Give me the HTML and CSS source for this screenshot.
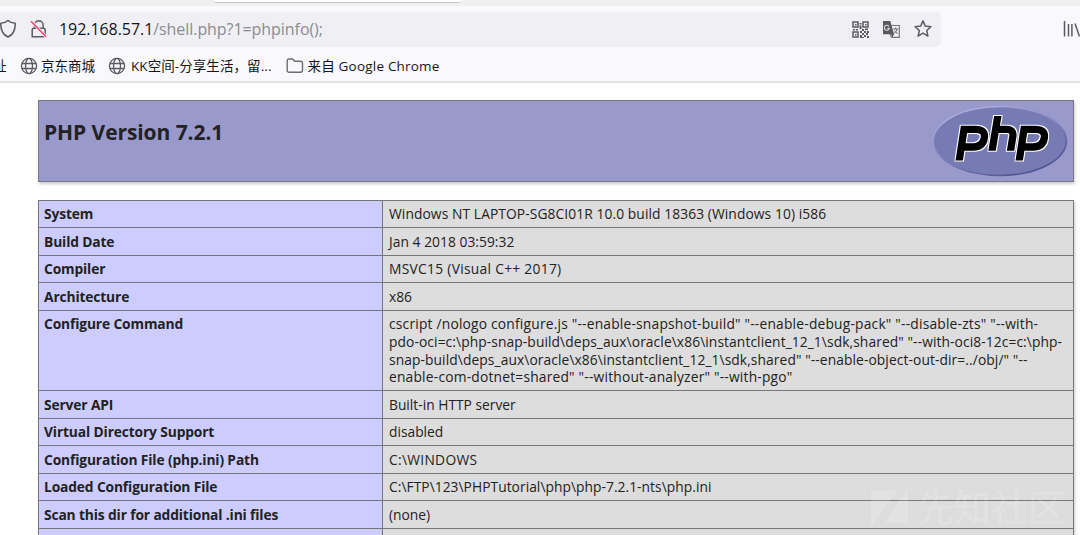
FILE: index.html
```html
<!DOCTYPE html>
<html lang="zh">
<head>
<meta charset="utf-8">
<title>phpinfo()</title>
<link rel="stylesheet" href="styles.css">
</head>
<body>
<div class="tabstrip"><div class="tab"></div></div>
<div class="navbar">
  <div class="urlbar">
    <svg class="shield" width="18" height="20" viewBox="0 0 18 20"><path d="M8 1.5C9.8 3.2 12.2 4 15.2 4.2C15.5 10.5 13.3 15.5 8 18C2.7 15.5.5 10.5.8 4.2C3.8 4 6.2 3.2 8 1.5Z" fill="none" stroke="#5b5b66" stroke-width="1.5" stroke-linejoin="round"/></svg>
    <svg class="lock" width="18" height="20" viewBox="0 0 18 20"><path d="M4.5 9V6a4.300 4.300 0 0 1 8.600 0V9M2.200 17.700V11Q2.200 9.200 4 9.200H13.300Q15.200 9.200 15.200 11V15.900Q15.200 17.700 13.300 17.700Z" fill="none" stroke="#5b5b66" stroke-width="1.500"/><path d="M1 1.800 16.200 18" stroke="#efeff3" stroke-width="3"/><path d="M1 2.200 16 17.700" stroke="#f0426c" stroke-width="1.500"/></svg>
    <div class="url"><span class="host">192.168.57.1</span><span class="path">/shell.php?1=phpinfo();</span></div>
    <svg class="qr" width="17" height="17" viewBox="0 0 17 17"><path d="M1 1h5v5H1zM11 1h5v5h-5zM1 11h5v5H1z" fill="none" stroke="#5b5b66" stroke-width="1.500"/><path d="M3 3h1.500v1.500H3zM13 3h1.500v1.500H13zM3 13h1.500v1.500H3zM7.500 2h2v1.500h-2zM7.500 4.500h2V8h-2zM1 8h2v1.500H1zM4 8h2v1.500H4zM10 8h2v2h-2zM13 7.500h3V9h-3zM8 10h2v2H8zM12 10h2v2h-2zM15 10h2v2h-2zM10 12h2v2h-2zM14 12h2v2h-2zM8 14h2v3H8zM12 14h2v2h-2zM15 15h2v2h-2zM10 16h2v1h-2z" fill="#5b5b66"/></svg>
    <svg class="translate" width="19" height="19" viewBox="0 0 19 19"><path d="M8 5.500h9.300v11.800H9.500L8 14" fill="#f5f5f7" stroke="#77777c" stroke-width="1.200"/><path d="M1 1h7.300L12 14.200H1z" fill="#5a5a5e"/><path d="M9 14.200h3L10.500 17z" fill="#3e3e42"/><path d="M7 6.400A2.500 2.500 0 1 0 7.300 8.300H5.200" fill="none" stroke="#ddd" stroke-width="1.100"/><path d="M11.200 9h5M13.700 7.500V9M15.300 9q-.8 3-3.600 4.700M12.300 10.500l3.500 3.500" fill="none" stroke="#66666b"/></svg>
    <svg class="star" width="20" height="20" viewBox="0 0 20 20"><path d="M10 1.900 12.300 7.100 17.900 7.700 13.700 11.500 14.900 17.100 10 14.200 5.100 17.100 6.300 11.500 2.100 7.700 7.700 7.100Z" fill="none" stroke="#5b5b66" stroke-width="1.500" stroke-linejoin="round"/></svg>
  </div>
  <svg class="library" width="17" height="18" viewBox="0 0 17 18"><path d="M1.500 1v15.500M5.500 4v12.500M8.900 4v12.500M12 3.500 16.500 16.500" stroke="#5b5b66" stroke-width="1.500" fill="none"/></svg>
</div>
<div class="bookmarks">
  <span class="bm bm-cut">址</span>
  <svg class="globe" width="18" height="18" viewBox="0 0 18 18"><g fill="none" stroke="#5b5b66" stroke-width="1.300"><circle cx="9" cy="9" r="7.600"/><ellipse cx="9" cy="9" rx="3.500" ry="7.600"/><path d="M2 6.500h14M2 11.500h14"/></g></svg>
  <span class="bm bm-jd">京东商城</span>
  <svg class="globe" width="18" height="18" viewBox="0 0 18 18"><g fill="none" stroke="#5b5b66" stroke-width="1.300"><circle cx="9" cy="9" r="7.600"/><ellipse cx="9" cy="9" rx="3.500" ry="7.600"/><path d="M2 6.500h14M2 11.500h14"/></g></svg>
  <span class="bm bm-kk">KK空间-分享生活，留...</span>
  <svg class="folder" width="18" height="18" viewBox="0 0 18 18"><path d="M1.200 4Q1.200 2 3.200 2H6.500L8.800 4.300H14.500Q16.500 4.300 16.500 6.300V13.200Q16.500 15.200 14.500 15.200H3.200Q1.200 15.200 1.200 13.200Z" fill="none" stroke="#6b6b74" stroke-width="1.400"/></svg>
  <span class="bm bm-gc">来自 Google Chrome</span>
</div>
<main class="page">
  <header class="banner">
    <h1>PHP Version 7.2.1</h1>
    <svg class="logo" width="138" height="74" viewBox="0 0 138 74">
      <defs>
        <linearGradient id="rim" x1="0.200" y1="0" x2="0.800" y2="1"><stop offset="0" stop-color="#b7b9e2"/><stop offset=".45" stop-color="#8587bd"/><stop offset="1" stop-color="#484b8d"/></linearGradient>
        <clipPath id="desc"><rect x="0" y="0" width="138" height="56.500"/></clipPath>
        <clipPath id="asc"><rect x="0" y="12" width="138" height="34.700"/></clipPath>
        <filter id="halo" x="-10%" y="-10%" width="120%" height="120%"><feMorphology operator="dilate" radius="1"/><feGaussianBlur stdDeviation=".3"/></filter>
        <g id="php" fill="none" stroke-width="7.300">
          <g clip-path="url(#desc)"><path d="M27.700 60 33 25.400H44Q54.800 25.400 53.300 34Q51.800 43 42 43H31"/><path d="M87.700 60 93 25.400H104Q114.800 25.400 113.300 34Q111.800 43 102 43H91"/></g>
          <g clip-path="url(#asc)"><path d="M67.500 8 60.500 50M65 25.400H75.500Q83 25.400 81.800 32.500L79 50"/></g>
        </g>
      </defs>
      <ellipse cx="69" cy="37" rx="67.300" ry="35.300" fill="url(#rim)"/>
      <ellipse cx="68.700" cy="37" rx="65.700" ry="33.700" fill="#777bb3"/>
      <g filter="url(#halo)"><use href="#php" stroke="#fff"/></g>
      <use href="#php" stroke="#000"/>
    </svg>
  </header>
  <section class="info">
    <div class="row short"><div class="k">System</div><div class="v ls1">Windows NT LAPTOP-SG8CI01R 10.0 build 18363 (Windows 10) i586</div></div>
    <div class="row"><div class="k">Build Date</div><div class="v ls0">Jan 4 2018 03:59:32</div></div>
    <div class="row short"><div class="k">Compiler</div><div class="v ls3">MSVC15 (Visual C++ 2017)</div></div>
    <div class="row"><div class="k">Architecture</div><div class="v">x86</div></div>
    <div class="row tall"><div class="k">Configure Command</div><div class="v"><span class="ls2">cscript /nologo configure.js "--enable-snapshot-build" "--enable-debug-pack" "--disable-zts" "--with-</span><br><span class="ls1">pdo-oci=c:\php-snap-build\deps_aux\oracle\x86\instantclient_12_1\sdk,shared" "--with-oci8-12c=c:\php-</span><br><span class="ls1">snap-build\deps_aux\oracle\x86\instantclient_12_1\sdk,shared" "--enable-object-out-dir=../obj/" "--</span><br><span class="ls2">enable-com-dotnet=shared" "--without-analyzer" "--with-pgo"</span></div></div>
    <div class="row"><div class="k">Server API</div><div class="v">Built-in HTTP server</div></div>
    <div class="row short"><div class="k">Virtual Directory Support</div><div class="v">disabled</div></div>
    <div class="row"><div class="k">Configuration File (php.ini) Path</div><div class="v ls3">C:\WINDOWS</div></div>
    <div class="row short"><div class="k">Loaded Configuration File</div><div class="v ls0">C:\FTP\123\PHPTutorial\php\php-7.2.1-nts\php.ini</div></div>
    <div class="row"><div class="k">Scan this dir for additional .ini files</div><div class="v">(none)</div></div>
    <div class="row"><div class="k"></div><div class="v"></div></div>
  </section>
</main>
<div class="watermark">
  <svg width="40" height="44" viewBox="0 0 40 44"><path d="M1 5H27L1 41ZM38 0V37H15Z" fill="#fff"/></svg>
  <span>先知社区</span>
</div>
</body>
</html>
```

FILE: styles.css
```css
* { box-sizing: border-box; }
html, body { margin: 0; height: 535px; overflow: hidden; }
body { position: relative; background: #fff; color: #222; font-family: "Open Sans", "Noto Sans CJK SC", sans-serif; }
svg { display: block; flex: none; }

.tabstrip { height: 6px; background: #f0f0f0; }
.tab { width: 247px; height: 3px; margin-left: 214px; background: #fff; border-bottom: 1px solid #c4c4c8; border-radius: 0 0 4px 4px; }

.navbar { display: flex; align-items: center; height: 46px; background: #f9f9fb; }
.urlbar { display: flex; align-items: center; width: 941px; height: 35px; background: #f0f0f4; border-radius: 0 5px 5px 0; }
.lock { margin-left: 12px; }
.url { flex: 1; margin-left: 11px; font-size: 16px; line-height: 24px; letter-spacing: -.06px; white-space: nowrap; }
.host { color: #15141a; }
.path { color: #8b8b92; }
.translate { margin-left: 13px; }
.star { margin: 0 8px 0 12px; }
.library { margin-left: 122px; }

.bookmarks { display: flex; align-items: center; height: 31px; padding-bottom: 2px; background: #f9f9fb; border-bottom: 2px solid #e3e3e6; font-size: 13.5px; line-height: 20px; color: #15141a; white-space: nowrap; }
.bm-cut { margin-left: -7px; width: 13px; margin-right: 14px; }
.bm-jd { margin: 0 13px 0 3px; }
.bm-kk { margin: 0 14px 0 5px; letter-spacing: .07px; }
.bm-gc { margin-left: 4px; letter-spacing: .2px; }

.page { padding: 17px 6px 0 38px; }
.banner { display: flex; justify-content: space-between; height: 82px; padding: 3px 4px 0 5px; background: #9999cc; border: 1px solid #77777f; box-shadow: 1px 2px 3px #ccc; }
.banner h1 { margin: 13px 0 0; font-size: 21px; line-height: 30px; font-weight: 700; letter-spacing: -.08px; white-space: nowrap; }

.info { margin-top: 18px; border: 1px solid #77777b; border-bottom: 0; box-shadow: 1px 2px 3px #ccc; font-size: 13.8px; line-height: 17.8px; }
.row { display: grid; grid-template-columns: 344px 1fr; height: 28px; border-bottom: 1px solid #77777b; }
.k { padding: 5px 0 0 5px; background: #ccccff; border-right: 1px solid #77777b; font-weight: 700; letter-spacing: -.14px; white-space: nowrap; overflow: hidden; }
.v { padding: 5px 0 0 6px; background: #dddddd; white-space: nowrap; overflow: hidden; }
.short { height: 27px; }
.short .k, .short .v { padding-top: 4px; }
.tall { height: 80px; }
.tall .k, .tall .v { padding-top: 4px; }
.ls0 { letter-spacing: .04px; }
.ls1 { letter-spacing: .09px; }
.ls2 { letter-spacing: .2px; }
.ls3 { letter-spacing: .29px; }

.watermark { position: absolute; left: 870px; top: 486px; display: flex; align-items: center; opacity: .15; color: #fff; font-size: 37px; line-height: 40px; }
.watermark span { margin-left: 7px; }
```
